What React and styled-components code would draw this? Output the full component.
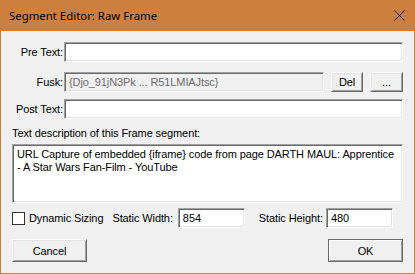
import styled, { createGlobalStyle } from "styled-components";

const GlobalStyle = createGlobalStyle`
  html, body {
    margin: 0;
    padding: 0;
    background: #ffffff;
  }
  * {
    box-sizing: border-box;
  }
`;

const Window = styled.div`
  width: 415px;
  height: 274px;
  display: flex;
  flex-direction: column;
  background: #f0f0f0;
  border: 1px solid #cd7f3f;
  border-top: none;
  font-family: "Liberation Sans", Arial, sans-serif;
  font-size: 11px;
  letter-spacing: -0.1px;
  color: #000;
`;

const TitleBar = styled.div`
  height: 31px;
  margin: 0 -1px;
  padding: 0 9px 0 9px;
  background: #cd7f3f;
  display: flex;
  align-items: center;
  justify-content: space-between;
  font-family: "Noto Sans", "Open Sans", sans-serif;
  font-size: 11.4px;
  letter-spacing: 0;
  color: #000;
`;

const CloseIcon = styled.svg`
  width: 11px;
  height: 11px;
  margin-right: 1px;
`;

const Body = styled.div`
  flex: 1;
  padding: 11px 11px 0 0;
  display: flex;
  flex-direction: column;
`;

const FieldRow = styled.div`
  display: grid;
  grid-template-columns: 63px 1fr;
  align-items: center;
  height: 20px;
  margin-top: ${(p) => p.$top || 0}px;
`;

const Label = styled.label`
  text-align: right;
  padding-right: 1px;
  white-space: nowrap;
`;

const Inline = styled.div`
  display: flex;
  align-items: center;
  gap: 7px;
  height: 100%;
`;

const Field = styled.input`
  height: ${(p) => p.$h || 20}px;
  width: ${(p) => (p.$w ? `${p.$w}px` : "100%")};
  flex: ${(p) => (p.$w ? "none" : 1)};
  margin: 0;
  padding: 0 0 0 4px;
  border-style: solid;
  border-width: 1px;
  border-color: #a0a0a0 #ffffff #ffffff #a0a0a0;
  box-shadow: inset 1px 1px #696969, inset -1px -1px #e3e3e3;
  background: ${(p) => (p.disabled ? "#f0f0f0" : "#ffffff")};
  color: ${(p) => (p.disabled ? "#6d6d6d" : "#000")};
  font-family: inherit;
  font-size: 11px;
  letter-spacing: -0.1px;
  outline: none;
`;

const Button = styled.button`
  height: ${(p) => p.$h || 20}px;
  width: ${(p) => p.$w}px;
  flex: none;
  margin: 0;
  padding: 0;
  background: #f0f0f0;
  border-style: solid;
  border-width: 1px;
  border-color: ${(p) =>
    p.$default ? "#696969" : "#ffffff #696969 #696969 #ffffff"};
  box-shadow: ${(p) =>
    p.$default
      ? "inset 1px 1px #ffffff, inset -1px -1px #a0a0a0"
      : "inset 1px 1px #e3e3e3, inset -1px -1px #a0a0a0"};
  font-family: inherit;
  font-size: 11px;
  letter-spacing: -0.1px;
  color: #000;
`;

const Caption = styled.div`
  margin: 8px 0 0 11px;
  height: 13px;
  line-height: 13px;
`;

const Memo = styled.textarea`
  display: block;
  margin: 4px 0 0 11px;
  height: 59px;
  width: calc(100% - 11px);
  padding: 3px 4px;
  resize: none;
  overflow: hidden;
  white-space: pre;
  border-style: solid;
  border-width: 1px;
  border-color: #a0a0a0 #ffffff #ffffff #a0a0a0;
  box-shadow: inset 1px 1px #696969, inset -1px -1px #e3e3e3;
  background: #ffffff;
  font-family: inherit;
  font-size: 11px;
  letter-spacing: -0.1px;
  line-height: 13px;
  color: #000;
  outline: none;
`;

const SizeRow = styled.div`
  display: flex;
  align-items: center;
  height: 20px;
  margin: 5px 0 0 11px;
`;

const Check = styled.span`
  width: 13px;
  height: 13px;
  border: 1px solid #333333;
  background: #ffffff;
  flex: none;
`;

const SizeText = styled.span`
  margin-left: ${(p) => p.$gap || 0}px;
  margin-right: ${(p) => p.$after || 0}px;
  white-space: nowrap;
`;

const Footer = styled.div`
  display: flex;
  justify-content: space-between;
  margin: 11px 0 0 11px;
`;

export default function App() {
  return (
    <>
      <GlobalStyle />
      <Window>
        <TitleBar>
          <span>Segment Editor: Raw Frame</span>
          <CloseIcon viewBox="0 0 11 11">
            <path d="M0.5 0.5 L10.5 10.5 M10.5 0.5 L0.5 10.5" stroke="#000" strokeWidth="1" fill="none" />
          </CloseIcon>
        </TitleBar>
        <Body>
          <FieldRow>
            <Label>Pre Text:</Label>
            <Field defaultValue="" />
          </FieldRow>
          <FieldRow $top={10}>
            <Label>Fusk:</Label>
            <Inline>
              <Field disabled defaultValue="{Djo_91jN3Pk ... R51LMIAJtsc}" />
              <Button $w={32}>Del</Button>
              <Button $w={33}>...</Button>
            </Inline>
          </FieldRow>
          <FieldRow $top={7}>
            <Label>Post Text:</Label>
            <Field defaultValue="" />
          </FieldRow>
          <Caption>Text description of this Frame segment:</Caption>
          <Memo
            readOnly
            value={
              "URL Capture of embedded {iframe} code from page DARTH MAUL: Apprentice\n- A Star Wars Fan-Film - YouTube"
            }
          />
          <SizeRow>
            <Check />
            <SizeText $gap={4} $after={9}>Dynamic Sizing</SizeText>
            <SizeText $after={5}>Static Width:</SizeText>
            <Field $w={67} defaultValue="854" />
            <SizeText $gap={14} $after={3}>Static Height:</SizeText>
            <Field $w={67} defaultValue="480" />
          </SizeRow>
          <Footer>
            <Button $w={75} $h={23}>Cancel</Button>
            <Button $w={75} $h={23} $default>OK</Button>
          </Footer>
        </Body>
      </Window>
    </>
  );
}
